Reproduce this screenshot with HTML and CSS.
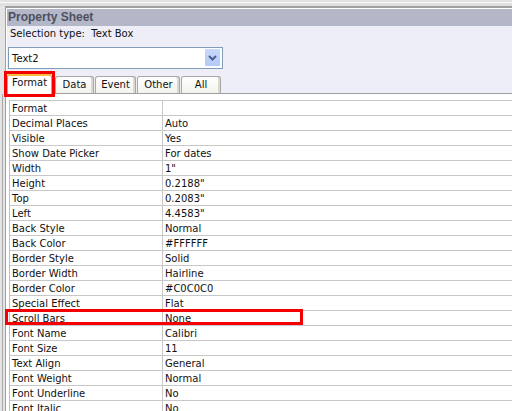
FILE: index.html
```html
<!DOCTYPE html>
<html>
<head>
<meta charset="utf-8">
<link rel="stylesheet" href="styles.css">
</head>
<body>
<div class="chrome"></div>
<div class="panel">
  <div class="panel-inner">
    <div class="title">Property Sheet</div>
    <div class="selection">Selection type:  Text Box</div>
    <div class="combo">
      <span class="combo-text">Text2</span>
      <span class="combo-btn"><svg width="15" height="17" viewBox="0 0 15 17"><polyline points="4,7 7.5,10.5 11,7" fill="none" stroke="#4b5f8d" stroke-width="2"/></svg></span>
    </div>
    <div class="tabs">
      <div class="tab active marked">Format</div>
      <div class="tab w-data">Data</div>
      <div class="tab w-event">Event</div>
      <div class="tab w-other">Other</div>
      <div class="tab w-all">All</div>
    </div>
    <div class="page">
      <div class="grid">
        <div class="row"><div class="k">Format</div><div class="v"></div></div>
        <div class="row"><div class="k">Decimal Places</div><div class="v">Auto</div></div>
        <div class="row"><div class="k">Visible</div><div class="v">Yes</div></div>
        <div class="row"><div class="k">Show Date Picker</div><div class="v">For dates</div></div>
        <div class="row"><div class="k">Width</div><div class="v">1"</div></div>
        <div class="row"><div class="k">Height</div><div class="v">0.2188"</div></div>
        <div class="row"><div class="k">Top</div><div class="v">0.2083"</div></div>
        <div class="row"><div class="k">Left</div><div class="v">4.4583"</div></div>
        <div class="row"><div class="k">Back Style</div><div class="v">Normal</div></div>
        <div class="row"><div class="k">Back Color</div><div class="v">#FFFFFF</div></div>
        <div class="row"><div class="k">Border Style</div><div class="v">Solid</div></div>
        <div class="row"><div class="k">Border Width</div><div class="v">Hairline</div></div>
        <div class="row"><div class="k">Border Color</div><div class="v">#C0C0C0</div></div>
        <div class="row"><div class="k">Special Effect</div><div class="v">Flat</div></div>
        <div class="row highlight"><div class="k">Scroll Bars</div><div class="v">None</div></div>
        <div class="row"><div class="k">Font Name</div><div class="v">Calibri</div></div>
        <div class="row"><div class="k">Font Size</div><div class="v">11</div></div>
        <div class="row"><div class="k">Text Align</div><div class="v">General</div></div>
        <div class="row"><div class="k">Font Weight</div><div class="v">Normal</div></div>
        <div class="row"><div class="k">Font Underline</div><div class="v">No</div></div>
        <div class="row"><div class="k">Font Italic</div><div class="v">No</div></div>
      </div>
    </div>
  </div>
</div>
</body>
</html>
```
FILE: styles.css
```css
html, body {
  margin: 0;
  padding: 0;
  height: 411px;
  overflow: hidden;
}
body {
  background: linear-gradient(#a8a8a8, #a8a8a8) no-repeat 2px 94px / 1px 100%, #e4e4e4;
  font-family: "DejaVu Sans", sans-serif;
  font-size: 10px;
  color: #111;
}
.chrome {
  height: 6px;
  background: linear-gradient(#e2e2e2 0 2px, #f8f8f8 2px 3px, #e0e0e0 3px);
}
.panel {
  margin-left: 5px;
  border-top: 2px solid #a0a0a0;
  border-left: 1px solid #a0a0a0;
}
.panel-inner {
  border-top: 1px solid #fff;
  border-left: 1px solid #fff;
  background: #eeeef8;
  height: 420px;
  display: flex;
  flex-direction: column;
}
.title {
  height: 17px;
  line-height: 17px;
  background: #b4b7c8;
  color: #4e5060;
  font-family: "Liberation Sans", Arial, sans-serif;
  font-weight: bold;
  font-size: 12px;
  padding-left: 1px;
}
.selection {
  white-space: pre;
  line-height: 14px;
  margin-top: 1px;
  padding-left: 3px;
}
.combo {
  margin: 6px 0 0 1px;
  width: 215px;
  height: 22px;
  box-sizing: border-box;
  border: 1px solid #7f9db9;
  background: #fff;
  display: flex;
  align-items: center;
}
.combo-text {
  padding-left: 3px;
}
.combo-btn {
  align-self: flex-start;
  margin: 1px 2px 0 auto;
  width: 15px;
  height: 17px;
  box-sizing: border-box;
  background: linear-gradient(#c9d8fb, #b4c9f6);
  border-radius: 1px;
  display: flex;
}
.tabs {
  margin-top: 5px;
  display: flex;
  align-items: flex-end;
  gap: 1px;
  border-bottom: 1px solid #a0a0a0;
  height: 19px;
}
.tab {
  height: 17px;
  box-sizing: border-box;
  border: 1px solid #a8a8a8;
  border-bottom: 0;
  border-radius: 3px 3px 0 0;
  background: linear-gradient(#ffffff, #f3f2ec);
  box-shadow: inset -2px 0 #dcd9cc;
  text-align: center;
  line-height: 16px;
}
.tab.active {
  height: 20px;
  width: 45px;
  margin-bottom: -1px;
  margin-right: 2px;
  border-top: 2px solid #f5be3c;
  background: #fff;
  box-shadow: none;
  line-height: 14px;
  position: relative;
}
.marked::after {
  content: "";
  position: absolute;
  top: -5px;
  left: -4px;
  right: -4px;
  bottom: -3px;
  border: 3px solid #f40000;
}
.w-data { width: 39px; }
.w-event { width: 41px; }
.w-other { width: 43px; }
.w-all { width: 40px; }
.page {
  flex: 1;
  background: #fff;
  padding: 6px 0 0 2px;
}
.grid {
  border-top: 1px solid #c8c8c8;
  border-left: 1px solid #c0c0c0;
}
.row {
  display: flex;
  height: 15px;
  box-sizing: border-box;
  border-bottom: 1px solid #c8c8c8;
  line-height: 15px;
  position: relative;
}
.k {
  width: 153px;
  box-sizing: border-box;
  padding-left: 2px;
  border-right: 1px solid #c8c8c8;
}
.v {
  flex: 1;
  padding-left: 2px;
}
.highlight::after {
  content: "";
  position: absolute;
  top: -2px;
  bottom: 0;
  left: -5px;
  width: 298px;
  box-sizing: border-box;
  border: 3px solid #f40000;
}
```
